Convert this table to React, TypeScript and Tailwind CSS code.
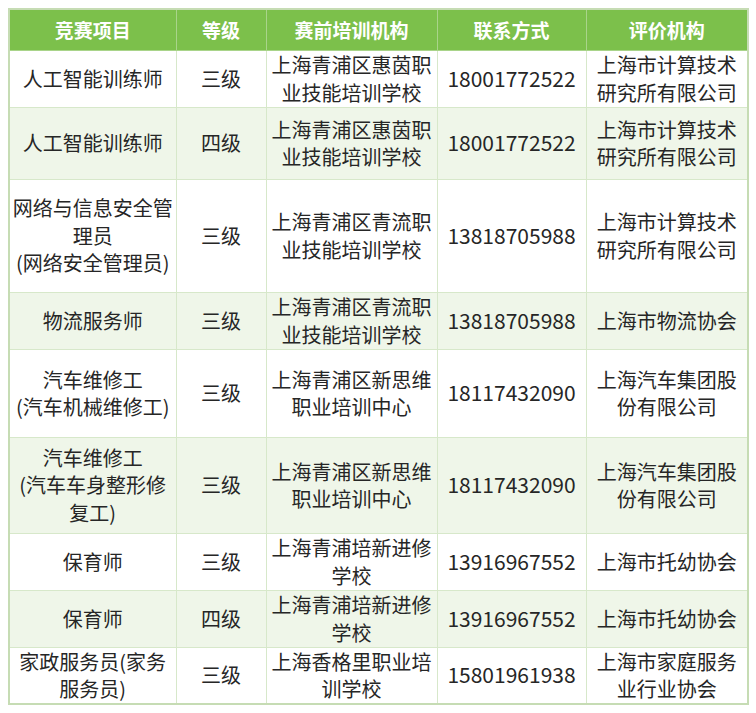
import React from "react";

type Row = { h: string; bg: string; c: string[][] };

const rows: Row[] = [
  { h: "h-[57px]", bg: "bg-white", c: [["人工智能训练师"], ["三级"], ["上海青浦区惠茵职", "业技能培训学校"], ["18001772522"], ["上海市计算技术", "研究所有限公司"]] },
  { h: "h-[72px]", bg: "bg-[#eff6e9]", c: [["人工智能训练师"], ["四级"], ["上海青浦区惠茵职", "业技能培训学校"], ["18001772522"], ["上海市计算技术", "研究所有限公司"]] },
  { h: "h-[113px]", bg: "bg-white", c: [["网络与信息安全管", "理员", "(网络安全管理员)"], ["三级"], ["上海青浦区青流职", "业技能培训学校"], ["13818705988"], ["上海市计算技术", "研究所有限公司"]] },
  { h: "h-[57px]", bg: "bg-[#eff6e9]", c: [["物流服务师"], ["三级"], ["上海青浦区青流职", "业技能培训学校"], ["13818705988"], ["上海市物流协会"]] },
  { h: "h-[88px]", bg: "bg-white", c: [["汽车维修工", "(汽车机械维修工)"], ["三级"], ["上海青浦区新思维", "职业培训中心"], ["18117432090"], ["上海汽车集团股", "份有限公司"]] },
  { h: "h-[96px]", bg: "bg-[#eff6e9]", c: [["汽车维修工", "(汽车车身整形修", "复工)"], ["三级"], ["上海青浦区新思维", "职业培训中心"], ["18117432090"], ["上海汽车集团股", "份有限公司"]] },
  { h: "h-[57px]", bg: "bg-white", c: [["保育师"], ["三级"], ["上海青浦培新进修", "学校"], ["13916967552"], ["上海市托幼协会"]] },
  { h: "h-[57px]", bg: "bg-[#eff6e9]", c: [["保育师"], ["四级"], ["上海青浦培新进修", "学校"], ["13916967552"], ["上海市托幼协会"]] },
  { h: "h-[54px]", bg: "bg-white", c: [["家政服务员(家务", "服务员)"], ["三级"], ["上海香格里职业培", "训学校"], ["15801961938"], ["上海市家庭服务", "业行业协会"]] },
];

const headers = ["竞赛项目", "等级", "赛前培训机构", "联系方式", "评价机构"];

export default function App() {
  return (
    <div
      className="w-[756px] h-[713px] bg-white pt-[8px] pl-[8px]"
      style={{ fontFamily: '"Noto Sans CJK SC", "Noto Sans", sans-serif' }}
    >
      <table className="table-fixed border-collapse w-[739px] border-2 border-[#c6dcb4]">
        <colgroup>
          <col className="w-[167px]" />
          <col className="w-[90px]" />
          <col className="w-[171px]" />
          <col className="w-[149px]" />
          <col className="w-[162px]" />
        </colgroup>
        <thead>
          <tr className="h-[41px] bg-[#7cc04b]">
            {headers.map((t) => (
              <th
                key={t}
                className="p-0 border border-[#a9d48a] text-white font-bold text-[19px] leading-[24px] text-center align-middle"
              >
                {t}
              </th>
            ))}
          </tr>
        </thead>
        <tbody>
          {rows.map((r, i) => (
            <tr key={i} className={`${r.h} ${r.bg}`}>
              {r.c.map((lines, j) => (
                <td
                  key={j}
                  className={`p-0 border border-[#d7e8ca] text-center align-middle whitespace-nowrap text-[#262626] leading-[27.5px] ${
                    j === 3 ? "text-[21px]" : "text-[20px]"
                  }`}
                >
                  {lines.map((l, k) => (
                    <div key={k}>{l}</div>
                  ))}
                </td>
              ))}
            </tr>
          ))}
        </tbody>
      </table>
    </div>
  );
}
